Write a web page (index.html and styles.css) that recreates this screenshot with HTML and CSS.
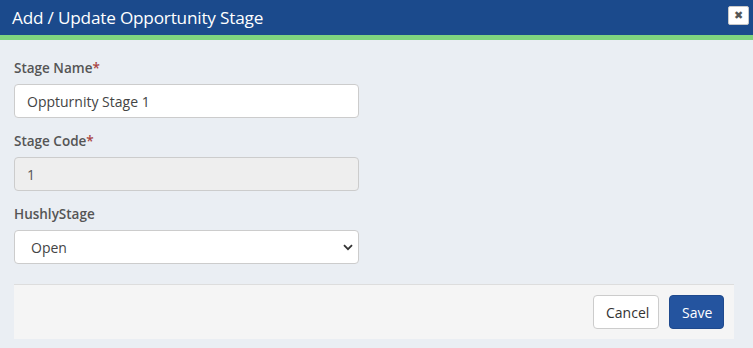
FILE: index.html
```html
<!DOCTYPE html>
<html lang="en">
<head>
    <meta charset="UTF-8">
    <meta name="viewport" content="width=device-width, initial-scale=1.0">
    <title>Add / Update Opportunity Stage</title>
    <link rel="stylesheet" href="styles.css">
</head>
<body>
    <div class="modal">
        <div class="modal-header">
            <h4>Add / Update Opportunity Stage</h4>
            <button class="close-button" type="button">&#10006;</button>
        </div>
        <div class="modal-body">
            <div class="form-group">
                <label>Stage Name<span class="req">*</span></label>
                <input type="text" class="form-control" value="Oppturnity Stage 1">
            </div>
            <div class="form-group">
                <label>Stage Code<span class="req">*</span></label>
                <input type="text" class="form-control" value="1" disabled>
            </div>
            <div class="form-group">
                <label>HushlyStage</label>
                <div class="select-wrap">
                    <select class="form-control">
                        <option>Open</option>
                        <option>Closed Won</option>
                        <option>Closed Lost</option>
                    </select>
                    <svg class="caret" width="10" height="7" viewBox="0 0 10 7">
                        <path d="M1 1.2 L5 5.2 L9 1.2" fill="none" stroke="#333" stroke-width="1.8"/>
                    </svg>
                </div>
            </div>
            <div class="modal-footer">
                <button class="btn btn-default" type="button">Cancel</button>
                <button class="btn btn-primary" type="button">Save</button>
            </div>
        </div>
    </div>
</body>
</html>
```

FILE: styles.css
```css
* {
    margin: 0;
    padding: 0;
    box-sizing: border-box;
}
body {
    background-color: #eaeef3;
    font-family: 'Open Sans', 'Noto Sans', sans-serif;
    color: #333;
    width: 753px;
    height: 348px;
    overflow: hidden;
}
.modal-header {
    background-color: #1b4a8c;
    border-bottom: 5px solid #7fd47f;
    height: 40px;
    display: flex;
    justify-content: space-between;
    align-items: flex-start;
    padding: 0 4px 0 12px;
}
.modal-header h4 {
    color: #fff;
    font-weight: normal;
    font-size: 17.2px;
    line-height: 35px;
    letter-spacing: -0.2px;
}
.close-button {
    margin-top: 6px;
    width: 21px;
    height: 19px;
    background-color: #fff;
    border: 1px solid #c8c8c8;
    border-radius: 2px;
    color: #555;
    font-size: 11px;
    line-height: 17px;
    cursor: pointer;
}
.modal-body {
    padding: 19px 19px 9px 14px;
}
.form-group {
    margin-bottom: 14px;
}
.form-group label {
    display: block;
    font-size: 13.5px;
    font-weight: 600;
    color: #555;
    line-height: 19px;
    margin-bottom: 6px;
}
.form-group .req {
    color: #a94442;
}
.form-control {
    display: block;
    width: 345px;
    height: 34px;
    padding: 0 12px;
    font-family: inherit;
    font-size: 14px;
    color: #444;
    background-color: #fff;
    border: 1px solid #ccc;
    border-radius: 4px;
}
.form-control:disabled {
    background-color: #eee;
    color: #555;
}
.select-wrap {
    position: relative;
    width: 345px;
}
select.form-control {
    appearance: none;
    -webkit-appearance: none;
    padding-left: 16px;
}
.caret {
    position: absolute;
    right: 6px;
    top: 14px;
    pointer-events: none;
}
.modal-footer {
    margin-top: 20px;
    height: 55px;
    background-color: #f5f5f5;
    border-top: 1px solid #ddd;
    display: flex;
    justify-content: flex-end;
    align-items: center;
    gap: 10px;
    padding-right: 10px;
}
.btn {
    height: 34px;
    padding: 0 12px;
    font-family: inherit;
    font-size: 14px;
    border-radius: 4px;
    cursor: pointer;
}
.btn-default {
    background-color: #fff;
    border: 1px solid #ccc;
    color: #333;
    width: 66px;
}
.btn-primary {
    background-color: #24549f;
    border: 1px solid #1f4a8e;
    color: #fff;
    width: 55px;
}
```
